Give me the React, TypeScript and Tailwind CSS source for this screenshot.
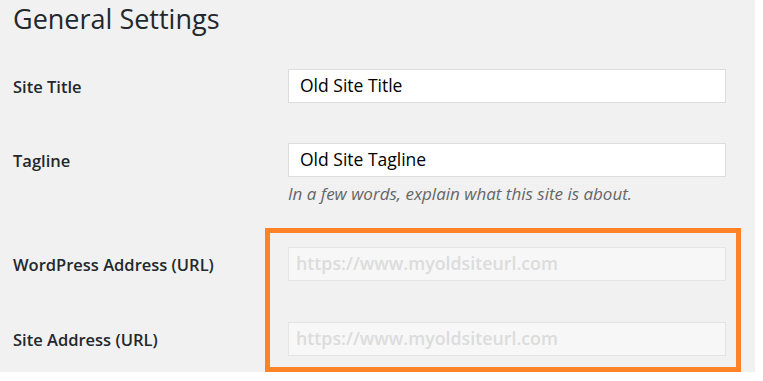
import React from "react";

const font = { fontFamily: '"Open Sans", "Noto Sans", sans-serif' };

const Row: React.FC<{ label: string; children: React.ReactNode; className?: string }> = ({
  label,
  children,
  className = "",
}) => (
  <div className={`flex ${className}`}>
    <div className="w-[275px] h-[34px] flex items-center pt-[3px] text-[16.5px] font-semibold text-[#23282d]">
      {label}
    </div>
    <div className="w-[438px]">{children}</div>
  </div>
);

export default function App() {
  return (
    <div className="w-[763px] h-[381px] bg-white" style={font}>
      <div className="relative w-[755px] h-[372px] bg-[#f1f1f1] pl-[13px]">
        <h1 className="h-[69px] pt-[1px] text-[27px] leading-[36px] font-normal text-[#23282d]">
          General Settings
        </h1>

        {/* Titel */}
        <Row label="Site Title">
          <input
            readOnly
            value="Old Site Title"
            className="w-full h-[34px] px-[11px] pb-[3px] bg-white border border-[#dddddd] text-[17.5px] text-black outline-none"
          />
        </Row>

        {/* Untertitel */}
        <Row label="Tagline" className="mt-[40px]">
          <input
            readOnly
            value="Old Site Tagline"
            className="w-full h-[34px] px-[11px] pb-[3px] bg-white border border-[#dddddd] text-[17.5px] text-black outline-none"
          />
          <p className="mt-[5px] text-[17px] italic text-[#666666] leading-[24px]">
            In a few words, explain what this site is about.
          </p>
        </Row>

        <Row label="WordPress Address (URL)" className="mt-[41px]">
          <input
            readOnly
            value="https://www.myoldsiteurl.com"
            className="w-full h-[34px] px-[7px] pb-[3px] bg-[#f7f7f7] border border-[#e4e4e4] text-[17.8px] font-semibold text-[#dcdcdc] outline-none"
          />
        </Row>

        <Row label="Site Address (URL)" className="mt-[41px]">
          <input
            readOnly
            value="https://www.myoldsiteurl.com"
            className="w-full h-[34px] px-[7px] pb-[3px] bg-[#f7f7f7] border border-[#e4e4e4] text-[17.8px] font-semibold text-[#dcdcdc] outline-none"
          />
        </Row>

        {/* Markierung */}
        <div className="absolute left-[265px] top-[228px] w-[476px] h-[144px] border-[5px] border-[#ff8228]" />
      </div>
    </div>
  );
}
